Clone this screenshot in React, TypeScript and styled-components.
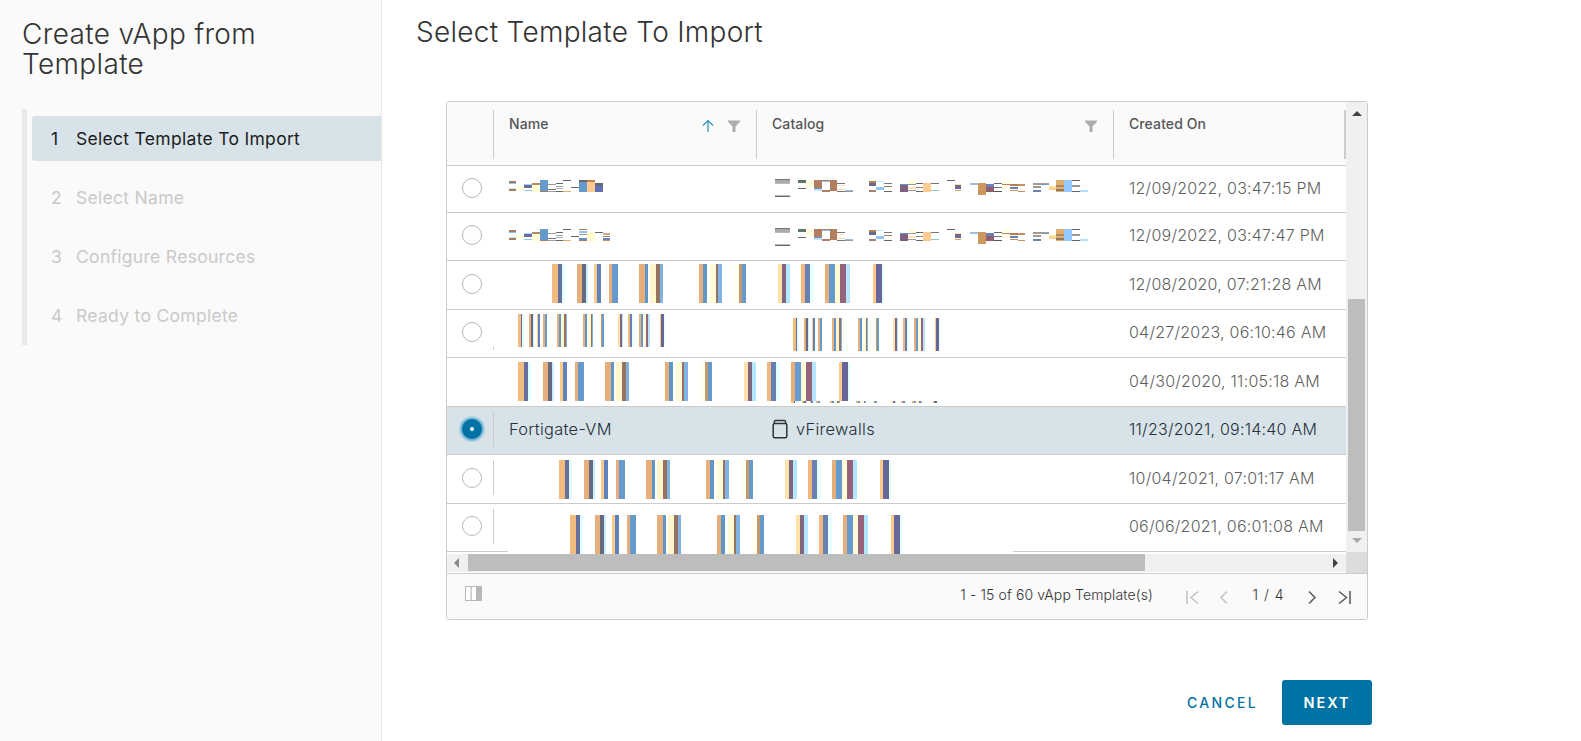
import React from "react";
import styled, { createGlobalStyle } from "styled-components";

const GlobalStyle = createGlobalStyle`
  html, body {
    margin: 0;
    padding: 0;
    background: #fff;
    font-family: Inter, "Open Sans", sans-serif;
  }
  #root {
    width: 1581px;
    height: 741px;
    overflow: hidden;
  }
  * {
    box-sizing: border-box;
  }
`;

const Page = styled.div`
  display: flex;
  width: 1581px;
  height: 741px;
`;

const Sidebar = styled.aside`
  width: 382px;
  flex: none;
  background: #fafafa;
  border-right: 1px solid #e8e8e8;
  padding: 19px 0 0 22px;
`;

const WizardTitle = styled.h1`
  margin: 0 0 30px;
  width: 300px;
  font-size: 28px;
  line-height: 30px;
  letter-spacing: 0.35px;
  font-weight: 300;
  color: #333;
`;

const StepRail = styled.ol`
  list-style: none;
  margin: 0;
  padding: 7px 0 0 5px;
  height: 236px;
  border-left: 5px solid #e8e8e8;
`;

const Step = styled.li<{ $active?: boolean }>`
  display: flex;
  align-items: center;
  height: 45px;
  margin-bottom: 14px;
  padding-left: 19px;
  font-size: 17.5px;
  letter-spacing: 0.3px;
  color: ${(p) => (p.$active ? "#1c1c1c" : "#c9c9c9")};
  background: ${(p) => (p.$active ? "#d8e3e9" : "transparent")};
  border-radius: 3px 0 0 3px;
`;

const StepNumber = styled.span`
  width: 25px;
  flex: none;
`;

const Main = styled.main`
  flex: 1;
  min-width: 0;
  padding: 0 209px 0 34px;
`;

const PageTitle = styled.h2`
  margin: 0;
  height: 101px;
  padding-top: 16px;
  font-size: 28px;
  line-height: 32px;
  letter-spacing: 0.28px;
  font-weight: 300;
  color: #333;
`;

const TableFrame = styled.section`
  width: 922px;
  height: 519px;
  margin-left: 30px;
  border: 1px solid #ccc;
  border-radius: 3px;
  overflow: hidden;
  display: grid;
  grid-template-columns: 899px 21px;
  grid-template-rows: 452px 19px 1fr;
`;

const Content = styled.div`
  overflow: hidden;
  background: #fff;
`;

const HeaderRow = styled.div`
  display: grid;
  grid-template-columns: 46px 263px 357px 233px;
  height: 64px;
  background: #fafafa;
  border-bottom: 1px solid #ccc;
`;

const HeadCell = styled.div<{ $edge?: boolean }>`
  position: relative;
  display: flex;
  align-items: flex-start;
  padding: 13px 16px 0 16px;
  font-size: 14px;
  line-height: 18px;
  letter-spacing: 0.1px;
  font-weight: 500;
  color: #565656;
  &::before {
    content: "";
    position: absolute;
    left: 0;
    top: 8px;
    height: 49px;
    width: 1px;
    background: #ccc;
  }
  &::after {
    content: "";
    display: ${(p) => (p.$edge ? "block" : "none")};
    position: absolute;
    right: 0;
    top: 8px;
    height: 49px;
    width: 2px;
    background: #ccc;
  }
`;

const BlankHeadCell = styled.div``;

const HeadLabel = styled.span`
  margin-right: auto;
`;

const HeadIcons = styled.span`
  display: flex;
  align-items: center;
  gap: 14px;
  height: 20px;
  margin-top: 1px;
`;

const Row = styled.div<{ $height: number; $selected?: boolean }>`
  position: relative;
  display: grid;
  grid-template-columns: 46px 263px 357px 233px;
  align-items: center;
  height: ${(p) => p.$height}px;
  padding-bottom: 3px;
  border-bottom: 1px solid #ccc;
  background: ${(p) => (p.$selected ? "#d8e3e9" : "#fff")};
`;

const RadioCell = styled.div`
  display: flex;
  padding-left: 15px;
  height: 20px;
`;

const Radio = styled.span<{ $checked?: boolean }>`
  display: block;
  width: 20px;
  height: 20px;
  border-radius: 50%;
  border: ${(p) => (p.$checked ? "8px solid #0072a3" : "1px solid #b8b8b8")};
  background: #fff;
  box-shadow: ${(p) => (p.$checked ? "0 0 2px 2px #6db2d2" : "none")};
`;

const BodyCell = styled.div<{ $divided?: boolean }>`
  position: relative;
  display: flex;
  align-items: center;
  gap: 8px;
  height: 35px;
  padding-left: 16px;
  font-size: 16.4px;
  letter-spacing: 0.3px;
  font-weight: 350;
  color: #24303a;
  &::before {
    content: "";
    display: ${(p) => (p.$divided ? "block" : "none")};
    position: absolute;
    left: 0;
    top: 0;
    bottom: 0;
    width: 1px;
    background: #ccc;
  }
`;

const DateCell = styled(BodyCell)<{ $selected?: boolean }>`
  font-size: 16px;
  letter-spacing: 0.24px;
  color: ${(p) => (p.$selected ? "#24303a" : "#5f5f5f")};
`;

const SmearLayer = styled.svg`
  position: absolute;
  left: 0;
  top: 0;
  width: 899px;
  height: 60px;
  overflow: visible;
  pointer-events: none;
`;

const VBar = styled.div`
  display: flex;
  flex-direction: column;
  align-items: center;
  height: 450px;
  padding: 9px 0 9px;
  background: #f0f0f0;
`;

const VThumb = styled.div`
  width: 17px;
  height: 232px;
  margin-top: auto;
  margin-bottom: 7px;
  background: #bdbdbd;
`;

const HBar = styled.div`
  display: flex;
  align-items: center;
  height: 18px;
  padding: 0 8px 1px 7px;
  background: #f0f0f0;
`;

const HThumb = styled.div`
  width: 677px;
  height: 17px;
  margin: 0 auto 0 9px;
  background: #bdbdbd;
`;

const Corner = styled.div`
  margin-top: -2px;
  background: #dcdcdc;
`;

const Arrow = styled.span<{ $dir: "up" | "down" | "left" | "right"; $color: string }>`
  display: block;
  flex: none;
  width: 0;
  height: 0;
  border-style: solid;
  border-color: transparent;
  border-width: ${(p) =>
    p.$dir === "up" || p.$dir === "down" ? (p.$dir === "up" ? "0 5px 5px" : "5px 5px 0") : p.$dir === "left" ? "5px 5px 5px 0" : "5px 0 5px 5px"};
  ${(p) => `border-${{ up: "bottom", down: "top", left: "right", right: "left" }[p.$dir]}-color: ${p.$color};`}
`;

const Footer = styled.div`
  grid-column: 1 / 3;
  display: flex;
  align-items: center;
  padding: 0 7px 5px 18px;
  background: #fafafa;
  border-top: 1px solid #ccc;
`;

const ItemCount = styled.span`
  margin-left: auto;
  margin-right: 23px;
  font-size: 14px;
  letter-spacing: 0.12px;
  font-weight: 350;
  color: #333;
`;

const PageButton = styled.button<{ $disabled?: boolean }>`
  width: 32px;
  height: 20px;
  padding: 0;
  margin-top: 6px;
  display: flex;
  align-items: center;
  justify-content: center;
  background: none;
  border: 0;
  color: ${(p) => (p.$disabled ? "#c4c4c4" : "#5e5e5e")};
`;

const PageNumber = styled.span`
  width: 56px;
  text-align: center;
  font-size: 14px;
  font-weight: 350;
  word-spacing: 2px;
  color: #333;
`;

const Actions = styled.div`
  display: flex;
  justify-content: flex-end;
  align-items: center;
  gap: 24px;
  margin-top: 60px;
`;

const CancelButton = styled.button`
  padding: 0;
  background: none;
  border: 0;
  font-family: inherit;
  font-size: 14px;
  font-weight: 500;
  letter-spacing: 2.3px;
  color: #0072a3;
`;

const NextButton = styled.button`
  width: 90px;
  height: 45px;
  background: #0072a3;
  border: 0;
  border-radius: 3px;
  font-family: inherit;
  font-size: 14.5px;
  font-weight: 600;
  letter-spacing: 2px;
  color: #fff;
`;

type Stripe = [number, number, string];
type Block = [number, number, number, number, string];

// widths in thirds of a pixel, measured off the 3x crop
const stripes: Stripe[] = [
  [0, 18, "#f2bb80"], [18, 30, "#66709f"], [30, 39, "#e0ffff"],
  [75, 90, "#e5ae7a"], [90, 102, "#666a80"], [102, 108, "#c9f0ff"],
  [126, 135, "#ffc98a"], [135, 147, "#5e82bd"],
  [171, 180, "#e6ae7e"], [180, 198, "#6699cc"],
  [261, 279, "#e6ae7a"], [279, 288, "#5f96c8"],
  [294, 312, "#fff5cc"], [312, 324, "#96725f"], [324, 333, "#7fb3e6"],
  [441, 453, "#e6ae7a"], [453, 465, "#5f96c8"],
  [474, 492, "#fffbd6"], [492, 498, "#96725f"], [498, 510, "#7fb3e6"],
  [546, 561, "#fffef0"], [561, 570, "#c49a6c"], [570, 582, "#6699cc"],
  [678, 690, "#ffe2aa"], [690, 702, "#80667f"], [702, 714, "#b3e6ff"],
  [747, 759, "#f0b880"], [759, 774, "#6680b3"], [774, 786, "#e6ffff"],
  [819, 831, "#e6ae7a"], [831, 849, "#6699cc"], [849, 864, "#fffbd6"],
  [864, 882, "#96647a"], [882, 894, "#b3e6ff"],
  [963, 972, "#ffc98a"], [972, 990, "#666699"], [990, 996, "#e0fff5"],
];

const nameHead: Block[] = [
  [9, 11, 7, 2, "#a87c60"], [9, 13, 7, 1, "#8fc0ee"], [9, 18, 7, 1, "#c0e8ff"], [9, 19, 7, 2, "#a87c60"],
  [16, 16, 8, 4, "#ffffe0"],
  [24, 14, 8, 1, "#a9d4f6"], [24, 15, 8, 3, "#6a6aa0"], [24, 20, 8, 1, "#8fc0ee"],
  [32, 13, 8, 2, "#b08d60"], [32, 15, 8, 7, "#ffffd8"],
  [40, 10, 8, 11, "#6699cc"], [40, 21, 8, 1, "#a87c60"],
  [48, 14, 8, 1, "#a09a90"], [48, 19, 8, 1, "#777777"], [48, 21, 8, 1, "#a0a0a0"],
  [56, 13, 7, 1, "#666666"], [56, 16, 7, 1, "#88aaaa"], [56, 18, 7, 1, "#aaaaaa"], [56, 21, 7, 1, "#666666"],
  [63, 10, 8, 1, "#666666"], [63, 21, 8, 1, "#e8b060"],
  [71, 17, 8, 1, "#666666"],
];

const nameTailA: Block[] = [
  [79, 10, 8, 2, "#666666"], [79, 12, 8, 10, "#6699cc"],
  [87, 10, 8, 2, "#c08050"], [87, 12, 8, 10, "#ffc98f"],
  [95, 13, 8, 2, "#666666"], [95, 15, 8, 7, "#6070b0"],
];

const nameTailB: Block[] = [
  [79, 10, 8, 1, "#a87c60"], [79, 12, 8, 2, "#8fc0ee"], [79, 15, 8, 1, "#999999"], [79, 19, 8, 2, "#6a90c0"], [79, 21, 8, 1, "#a08060"],
  [87, 13, 8, 9, "#ffffd0"],
  [95, 13, 8, 1, "#666666"],
  [103, 14, 7, 2, "#d0a890"], [103, 17, 7, 1, "#a08060"], [103, 19, 7, 2, "#6a80c0"], [103, 21, 7, 1, "#c09060"],
];

const catalogBlocks: Block[] = [
  [15, 9, 15, 1, "#777777"], [15, 10, 15, 3, "#aaaaaa"], [15, 13, 15, 1, "#bbbbbb"], [15, 25, 15, 1, "#bbbbbb"], [15, 26, 15, 1, "#666666"],
  [38, 10, 8, 1, "#666666"], [38, 11, 8, 2, "#5a7a6a"], [38, 18, 8, 1, "#666666"],
  [46, 10, 8, 7, "#ffffe0"],
  [54, 10, 8, 8, "#b07f62"], [54, 18, 8, 1, "#5f96d0"], [54, 19, 8, 2, "#c9e0f8"],
  [62, 10, 8, 1, "#b07f62"], [62, 11, 8, 1, "#8fc0ee"], [62, 20, 8, 2, "#b07f62"],
  [70, 10, 7, 11, "#b07f62"],
  [77, 13, 8, 1, "#777777"], [77, 15, 8, 1, "#ffe2c0"], [77, 19, 8, 1, "#ffe0b0"], [77, 21, 8, 1, "#777777"],
  [85, 20, 8, 1, "#8fc0ee"], [85, 21, 8, 1, "#999999"],
  [109, 11, 7, 2, "#b08050"], [109, 13, 7, 3, "#6a6a90"], [109, 20, 7, 2, "#a08070"],
  [116, 11, 8, 1, "#c0f0ff"], [116, 17, 8, 3, "#8fc8f8"],
  [124, 13, 8, 1, "#777777"], [124, 16, 8, 1, "#a08060"], [124, 21, 8, 1, "#666666"],
  [140, 14, 8, 1, "#5f96d0"], [140, 15, 8, 7, "#7f6080"],
  [148, 10, 8, 4, "#ffffe0"], [148, 14, 8, 1, "#999999"], [148, 17, 8, 2, "#ffe0b0"], [148, 20, 8, 1, "#999999"],
  [156, 13, 7, 1, "#666666"], [156, 17, 7, 1, "#888888"], [156, 21, 7, 1, "#666666"],
  [163, 13, 8, 9, "#ffcc8f"],
  [171, 13, 8, 1, "#777777"], [171, 20, 8, 1, "#8fc8c8"],
  [187, 10, 8, 1, "#666666"],
  [195, 14, 6, 1, "#ffe2a0"], [195, 15, 6, 4, "#6a6a90"], [195, 20, 6, 1, "#e0a060"],
  [210, 13, 8, 2, "#a0c0d8"],
  [218, 13, 8, 12, "#cc9860"],
  [226, 14, 8, 3, "#6a80c0"], [226, 17, 8, 5, "#8f5f70"],
  [234, 13, 8, 1, "#666666"], [234, 17, 8, 1, "#777777"], [234, 21, 8, 1, "#555555"],
  [242, 10, 8, 9, "#ffffe6"], [242, 14, 8, 1, "#b07f80"],
  [250, 14, 8, 2, "#b08050"], [250, 17, 8, 2, "#6a80b0"], [250, 20, 8, 1, "#c09060"],
  [258, 14, 7, 2, "#c09060"], [258, 21, 7, 1, "#c09060"],
  [273, 13, 8, 2, "#a09a90"], [273, 16, 8, 2, "#a09a90"], [273, 20, 8, 2, "#6a80b0"],
  [281, 13, 8, 1, "#b0a080"], [281, 14, 8, 1, "#6f9fd0"],
  [289, 16, 7, 2, "#ffe2a0"], [289, 18, 7, 2, "#ffd090"],
  [296, 10, 8, 12, "#e0ae70"], [296, 15, 8, 2, "#b08a60"], [296, 19, 8, 2, "#8a7a60"],
  [304, 10, 8, 12, "#94c8ff"],
  [312, 10, 8, 1, "#666666"], [312, 15, 8, 2, "#999999"], [312, 21, 8, 1, "#666666"],
  [320, 20, 8, 2, "#b0e0ff"],
];

function VBars(props: { x: number; y: number; h: number; scale?: number }) {
  const scale = props.scale ?? 1;
  return (
    <>
      {stripes.map((s, i) => (
        <rect
          key={i}
          x={props.x + (s[0] / 3) * scale}
          y={props.y}
          width={((s[1] - s[0]) / 3) * scale}
          height={props.h}
          fill={s[2]}
        />
      ))}
    </>
  );
}

function Blocks(props: { x: number; y: number; items: Block[] }) {
  return (
    <g transform={`translate(${props.x} ${props.y})`}>
      {props.items.map((b, i) => (
        <rect key={i} x={b[0]} y={b[1]} width={b[2]} height={b[3]} fill={b[4]} />
      ))}
    </g>
  );
}

function Smear(props: { children: React.ReactNode }) {
  return (
    <SmearLayer viewBox="0 0 899 60" shapeRendering="crispEdges" aria-hidden="true">
      {props.children}
    </SmearLayer>
  );
}

const NARROW = 147 / 332;

function FilterIcon() {
  return (
    <svg width="12" height="12" viewBox="0 0 12 12">
      <path d="M0 0.5h12v1.2L7.5 6.4V12H4.5V6.4L0 1.7z" fill="#adadad" />
    </svg>
  );
}

function SortUpIcon() {
  return (
    <svg width="12" height="14" viewBox="0 0 12 14" fill="none" stroke="#2f8fb8" strokeWidth="1.2">
      <path d="M6 13V1.5M1 6.5l5-5 5 5" />
    </svg>
  );
}

function CatalogIcon() {
  return (
    <svg width="16" height="20" viewBox="0 0 16 20" fill="none" stroke="#2b3338" strokeWidth="1.5">
      <rect x="1.2" y="4.6" width="13.6" height="14.2" rx="1.5" />
      <path d="M2.4 4V2.8c0-.9 .5-1.4 1.4-1.4h8.4c.9 0 1.4 .5 1.4 1.4V4" />
    </svg>
  );
}

function ColumnsIcon() {
  return (
    <svg width="17" height="16" viewBox="0 0 17 16">
      <rect x="0.5" y="0.5" width="16" height="14" fill="#fff" stroke="#b8b8b8" />
      <rect x="11" y="0.5" width="6" height="14.5" fill="#b8b8b8" />
      <rect x="5.5" y="0.5" width="1.2" height="14.5" fill="#b8b8b8" />
    </svg>
  );
}

function PagerIcon(props: { kind: "first" | "prev" | "next" | "last" }) {
  const paths = {
    first: "M1 1v13M12 1.5L5 7.5l7 6",
    prev: "M8 1.5L2 7.5l6 6",
    next: "M2 1.5l6 6-6 6",
    last: "M1 1.5l7.5 6-7.5 6M12 1v13",
  };
  const w = props.kind === "first" || props.kind === "last" ? 13 : 10;
  return (
    <svg width={w} height="15" viewBox={`0 0 ${w} 15`} fill="none" stroke="currentColor" strokeWidth="1.6">
      <path d={paths[props.kind]} />
    </svg>
  );
}

export default function App() {
  return (
    <Page>
      <GlobalStyle />
      <Sidebar>
        <WizardTitle>Create vApp from Template</WizardTitle>
        <StepRail>
          <Step $active>
            <StepNumber>1</StepNumber>Select Template To Import
          </Step>
          <Step>
            <StepNumber>2</StepNumber>Select Name
          </Step>
          <Step>
            <StepNumber>3</StepNumber>Configure Resources
          </Step>
          <Step>
            <StepNumber>4</StepNumber>Ready to Complete
          </Step>
        </StepRail>
      </Sidebar>

      <Main>
        <PageTitle>Select Template To Import</PageTitle>
        <TableFrame>
          <Content>
            <HeaderRow>
              <BlankHeadCell />
              <HeadCell>
                <HeadLabel>Name</HeadLabel>
                <HeadIcons>
                  <SortUpIcon />
                  <FilterIcon />
                </HeadIcons>
              </HeadCell>
              <HeadCell>
                <HeadLabel>Catalog</HeadLabel>
                <HeadIcons>
                  <FilterIcon />
                </HeadIcons>
              </HeadCell>
              <HeadCell $edge>
                <HeadLabel>Created On</HeadLabel>
              </HeadCell>
            </HeaderRow>

            <Row $height={47}>
              <RadioCell><Radio /></RadioCell>
              <BodyCell />
              <BodyCell />
              <DateCell>12/09/2022, 03:47:15 PM</DateCell>
              <Smear>
                <Blocks x={53} y={4} items={nameHead} />
                <Blocks x={53} y={4} items={nameTailA} />
                <Blocks x={313} y={4} items={catalogBlocks} />
              </Smear>
            </Row>
            <Row $height={48}>
              <RadioCell><Radio /></RadioCell>
              <BodyCell />
              <BodyCell />
              <DateCell>12/09/2022, 03:47:47 PM</DateCell>
              <Smear>
                <Blocks x={53} y={6} items={nameHead} />
                <Blocks x={53} y={6} items={nameTailB} />
                <Blocks x={313} y={6} items={catalogBlocks} />
              </Smear>
            </Row>
            <Row $height={49}>
              <RadioCell><Radio /></RadioCell>
              <BodyCell />
              <BodyCell />
              <DateCell>12/08/2020, 07:21:28 AM</DateCell>
              <Smear>
                <VBars x={105} y={3} h={39} />
              </Smear>
            </Row>
            <Row $height={48}>
              <RadioCell><Radio /></RadioCell>
              <BodyCell $divided />
              <BodyCell />
              <DateCell>04/27/2023, 06:10:46 AM</DateCell>
              <Smear>
                <rect x={46} y={0} width={2} height={37} fill="#fff" />
                <VBars x={71} y={4} h={33} scale={NARROW} />
                <VBars x={346} y={8} h={33} scale={NARROW} />
              </Smear>
            </Row>
            <Row $height={49}>
              <RadioCell />
              <BodyCell />
              <BodyCell />
              <DateCell>04/30/2020, 11:05:18 AM</DateCell>
              <Smear>
                <VBars x={71} y={4} h={39} />
                <VBars x={344} y={43} h={2} scale={NARROW} />
              </Smear>
            </Row>
            <Row $height={48} $selected>
              <RadioCell><Radio $checked /></RadioCell>
              <BodyCell $divided>Fortigate-VM</BodyCell>
              <BodyCell>
                <CatalogIcon />
                vFirewalls
              </BodyCell>
              <DateCell $selected>11/23/2021, 09:14:40 AM</DateCell>
            </Row>
            <Row $height={49}>
              <RadioCell><Radio /></RadioCell>
              <BodyCell $divided />
              <BodyCell />
              <DateCell>10/04/2021, 07:01:17 AM</DateCell>
              <Smear>
                <VBars x={112} y={5} h={39} />
              </Smear>
            </Row>
            <Row $height={48}>
              <RadioCell><Radio /></RadioCell>
              <BodyCell $divided />
              <BodyCell />
              <DateCell>06/06/2021, 06:01:08 AM</DateCell>
              <Smear>
                <rect x={61} y={47} width={505} height={3} fill="#fff" />
                <VBars x={123} y={11} h={39} />
              </Smear>
            </Row>
          </Content>

          <VBar>
            <Arrow $dir="up" $color="#444" />
            <VThumb />
            <Arrow $dir="down" $color="#aaa" />
          </VBar>

          <HBar>
            <Arrow $dir="left" $color="#888" />
            <HThumb />
            <Arrow $dir="right" $color="#444" />
          </HBar>
          <Corner />

          <Footer>
            <ColumnsIcon />
            <ItemCount>1 - 15 of 60 vApp Template(s)</ItemCount>
            <PageButton $disabled><PagerIcon kind="first" /></PageButton>
            <PageButton $disabled><PagerIcon kind="prev" /></PageButton>
            <PageNumber>1 / 4</PageNumber>
            <PageButton><PagerIcon kind="next" /></PageButton>
            <PageButton><PagerIcon kind="last" /></PageButton>
          </Footer>
        </TableFrame>

        <Actions>
          <CancelButton>CANCEL</CancelButton>
          <NextButton>NEXT</NextButton>
        </Actions>
      </Main>
    </Page>
  );
}
